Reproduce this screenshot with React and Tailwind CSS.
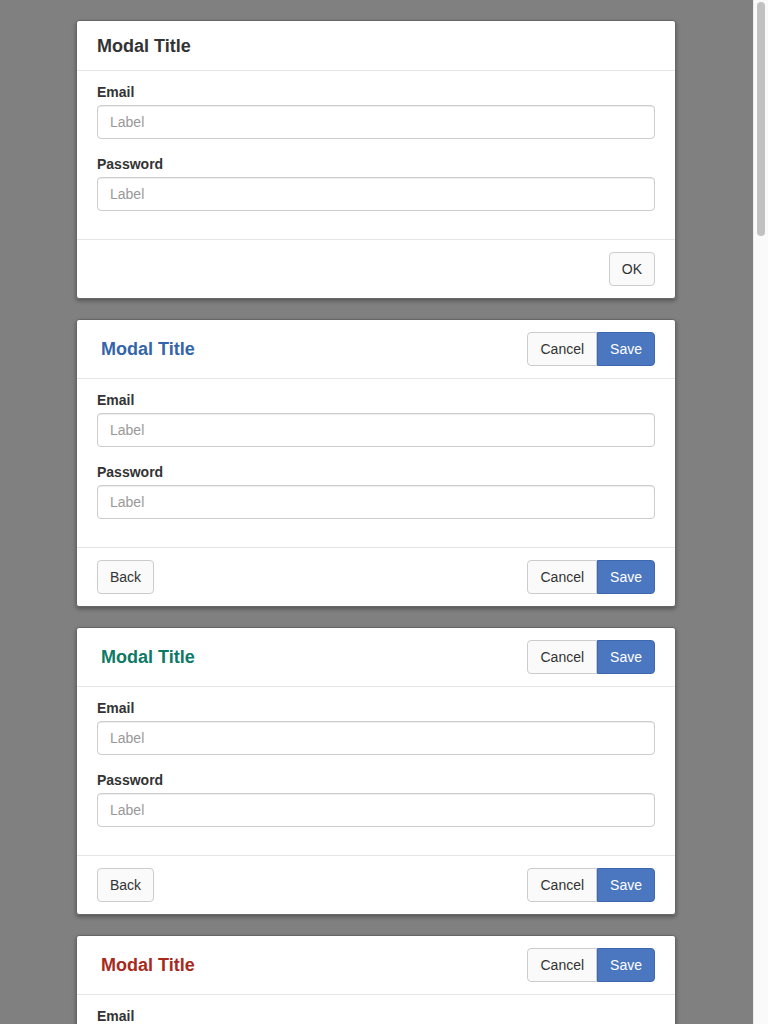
import React from "react";

function Field({ label, last }) {
  return (
    <div className={last ? "" : "mb-[15px]"}>
      <div className="text-sm leading-5 font-bold text-[#333] mb-[3px]">{label}</div>
      <input
        type="text"
        placeholder="Label"
        className="block w-full h-[34px] px-3 text-sm text-[#555] placeholder:text-[#999] bg-white border border-[#ccc] rounded-[4px] shadow-[inset_0_1px_1px_rgba(0,0,0,0.075)] outline-none"
      />
    </div>
  );
}

function Btn({ children, className = "" }) {
  return (
    <button
      type="button"
      className={
        "h-[34px] px-3 text-sm text-[#333] bg-[#fafafa] border border-[#ccc] rounded-[4px] " +
        className
      }
    >
      {children}
    </button>
  );
}

function CancelSave() {
  return (
    <div className="flex">
      <button
        type="button"
        className="h-[34px] px-3 text-sm text-[#333] bg-[#fafafa] border border-[#ccc] rounded-l-[4px]"
      >
        Cancel
      </button>
      <button
        type="button"
        className="h-[34px] px-3 text-sm text-white bg-[#4a77c0] border border-[#3d68ad] rounded-r-[4px]"
      >
        Save
      </button>
    </div>
  );
}

function Body() {
  return (
    <div className="px-5 pt-[11px] pb-[28px]">
      <Field label="Email" />
      <Field label="Password" last />
    </div>
  );
}

function Card({ children }) {
  return (
    <div className="bg-white border border-[#666] rounded-[3px] shadow-[0_2px_4px_rgba(0,0,0,0.35)] mb-5">
      {children}
    </div>
  );
}

function ColorCard({ color }) {
  return (
    <Card>
      <div className="flex items-center justify-between px-5 py-3 border-b border-[#e5e5e5]">
        <div className={"pl-1 text-[18px] leading-6 font-bold " + color}>Modal Title</div>
        <CancelSave />
      </div>
      <Body />
      <div className="flex items-center justify-between px-5 py-3 border-t border-[#e5e5e5]">
        <Btn>Back</Btn>
        <CancelSave />
      </div>
    </Card>
  );
}

export default function App() {
  return (
    <div
      className="min-h-screen bg-[#808080] pt-5 pb-[2px] pr-4"
      style={{ fontFamily: '"Liberation Sans", Arial, Helvetica, sans-serif' }}
    >
      <div className="w-[600px] mx-auto">
        <Card>
          <div className="flex items-center h-[50px] px-5 border-b border-[#e5e5e5]">
            <div className="text-[18px] leading-6 font-bold text-[#333]">Modal Title</div>
          </div>
          <Body />
          <div className="flex items-center justify-end px-5 py-3 border-t border-[#e5e5e5]">
            <Btn>OK</Btn>
          </div>
        </Card>
        <ColorCard color="text-[#3465aa]" />
        <ColorCard color="text-[#0e7a66]" />
        <ColorCard color="text-[#a82a1c]" />
      </div>
      <div className="fixed top-0 right-0 h-screen w-[15px] bg-[#fafafa] border-l border-[#ececec]">
        <div className="mt-[2px] ml-[3px] w-[8px] h-[234px] rounded-full bg-[#c1c1c1]" />
      </div>
    </div>
  );
}
